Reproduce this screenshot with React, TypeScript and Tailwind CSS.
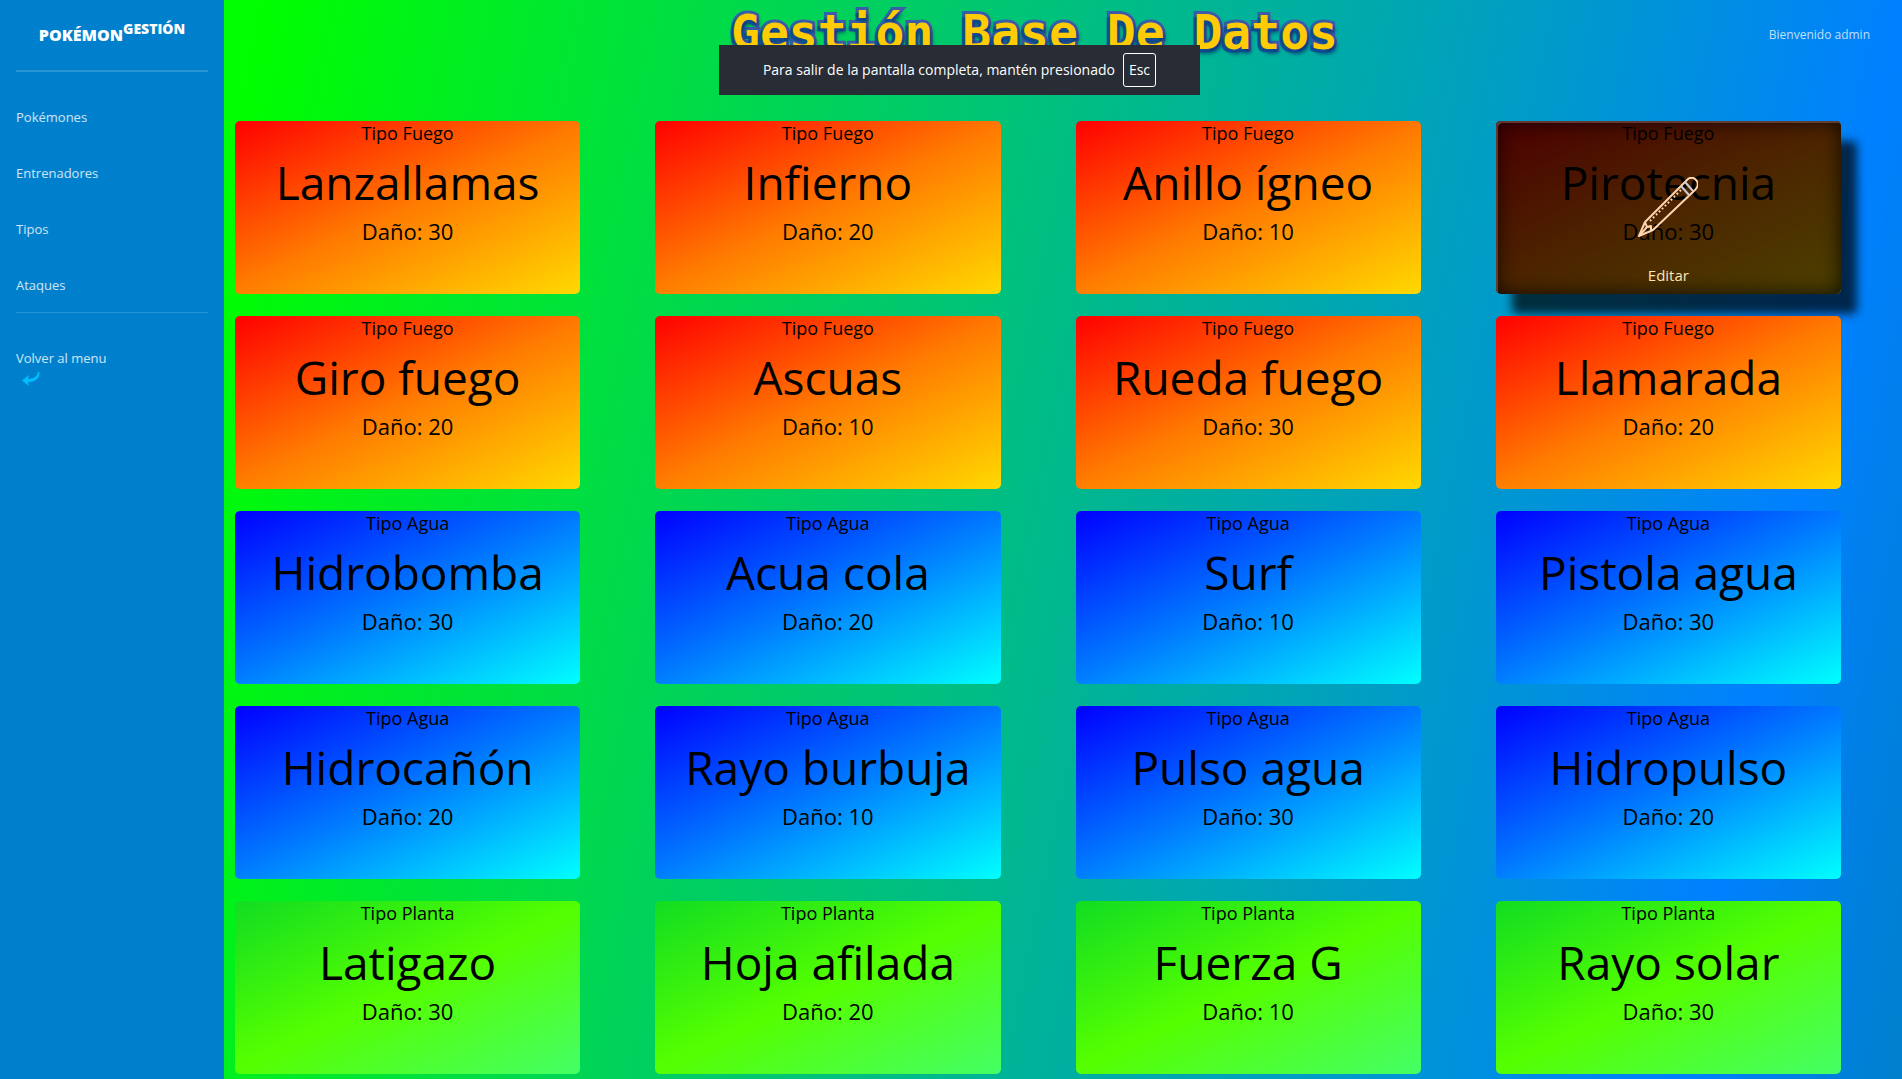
const groups: [string, string[]][] = [
  ["Fuego", ["Lanzallamas", "Infierno", "Anillo ígneo", "Pirotecnia", "Giro fuego", "Ascuas", "Rueda fuego", "Llamarada"]],
  ["Agua", ["Hidrobomba", "Acua cola", "Surf", "Pistola agua", "Hidrocañón", "Rayo burbuja", "Pulso agua", "Hidropulso"]],
  ["Planta", ["Latigazo", "Hoja afilada", "Fuerza G", "Rayo solar"]],
];

const attacks = groups.flatMap(([type, list]) =>
  list.map((name, i) => ({ type, name, damage: [30, 20, 10][i % 3] })),
);

const gradients: Record<string, string> = {
  Fuego: "bg-[linear-gradient(155deg,#ff0000_0%,#ff7b00_50%,#ffd900_100%)]",
  Agua: "bg-[linear-gradient(155deg,#0000ff_0%,#007bff_50%,#00ffff_100%)]",
  Planta: "bg-[linear-gradient(155deg,#11dd22_0%,#55ff00_50%,#44ff66_100%)]",
};

const links = ["Pokémones", "Entrenadores", "Tipos", "Ataques"];

function Pencil() {
  return (
    <svg viewBox="0 0 60 60" className="h-[60px] w-[60px]" fill="none" stroke="#ffd5b0" strokeWidth="2" strokeLinejoin="round" aria-hidden="true">
      <path d="M1 59 L7 45 L49 3 C51 0 56 0 58 3 C61 6 60 10 57 13 L15 53 Z" />
      <path d="M7 45 L9 50 L13 49 L13 53 L15 53" />
      <path d="M1 59 L9 50" />
      <path d="M43 9 L51 18 M47 5 L55 14" stroke="#c9cdd8" />
      <path d="M12 44 L43 13" strokeDasharray="1.8 2.4" />
    </svg>
  );
}

function Card({ type, name, damage, active }: { type: string; name: string; damage: number; active: boolean }) {
  return (
    <article className={`relative h-[173px] rounded-[5px] text-center text-black ${gradients[type]} ${active ? "shadow-[16px_20px_10px_rgba(0,0,0,0.7)]" : ""}`}>
      <p className="text-lg leading-6">Tipo {type}</p>
      <h2 className="mt-1 text-[46px] leading-[66px]">{name}</h2>
      <p className="text-[22px] leading-8">Daño: {damage}</p>
      {active && (
        <button className="absolute inset-0 flex flex-col items-center rounded-[5px] bg-black/70 pt-[56px] text-[15px] text-[#ffe4b5] shadow-[inset_2px_2px_0_rgba(120,80,70,0.7),inset_0_0_20px_rgba(0,0,0,0.8)]">
          <Pencil />
          <span className="mt-6 leading-7">Editar</span>
        </button>
      )}
    </article>
  );
}

export default function App() {
  return (
    <div className="flex h-screen overflow-hidden font-['Open_Sans','Noto_Sans',sans-serif]">
      <aside className="w-56 shrink-0 bg-[#0080cc] px-4 text-[13px] text-white/80">
        <a href="#inicio" className="flex h-[70px] items-center justify-center text-base font-extrabold uppercase text-white">
          <span>Pokémon<sup className="text-sm">Gestión</sup></span>
        </a>
        <hr className="border-t-2 border-white/15" />
        <nav className="pt-4">
          {links.map((link) => (
            <a key={link} href={`#${link}`} className="flex h-14 items-center pt-1">{link}</a>
          ))}
        </nav>
        <hr className="border-white/15" />
        <a href="#menu" className="mt-[35px] block leading-5">
          Volver al menu
          <svg viewBox="0 0 18 14" className="ml-1.5 mt-1 h-3.5 w-[18px]" fill="#00bfff" aria-hidden="true">
            <path d="M0 8.5 L7 3 L6 7 C11 7 15 5 16 0 L17.5 0 C18 6 13 10.500 6 10 L7 14 Z" />
          </svg>
        </a>
      </aside>
      <main className="relative min-w-0 flex-1 bg-[linear-gradient(102deg,#00ff00_2%,#0080ff_88%,#0080cc_100%)]">
        <header className="grid h-[121px] grid-cols-[1fr_auto_1fr] items-start pl-[11px] pr-8">
          <h1 className="col-start-2 whitespace-nowrap pr-9 pt-1 font-['DejaVu_Sans_Mono',monospace] text-[48px] font-bold leading-[56px] text-[#ffcb05] [-webkit-text-stroke:6px_#3a5da8] [paint-order:stroke_fill] [text-shadow:-3px_3px_1px_#0f4a90,2px_4px_4px_#003a70]">
            Gestión Base De Datos
          </h1>
          <p className="pt-[25px] text-right text-xs leading-5 text-white/75">Bienvenido admin</p>
        </header>
        <div role="status" className="absolute left-[495px] top-[45px] flex h-[50px] w-[481px] items-center justify-center gap-2 bg-[#282c34] text-sm text-white">
          Para salir de la pantalla completa, mantén presionado
          <kbd className="rounded-[3px] border border-white px-[5px] py-1.5 font-['Open_Sans',sans-serif]">Esc</kbd>
        </div>
        <section className="grid grid-cols-4 gap-x-[75px] gap-y-[22px] pl-[11px] pr-[61px]">
          {attacks.map((attack) => (
            <Card key={attack.name} {...attack} active={attack.name === "Pirotecnia"} />
          ))}
        </section>
      </main>
    </div>
  );
}
